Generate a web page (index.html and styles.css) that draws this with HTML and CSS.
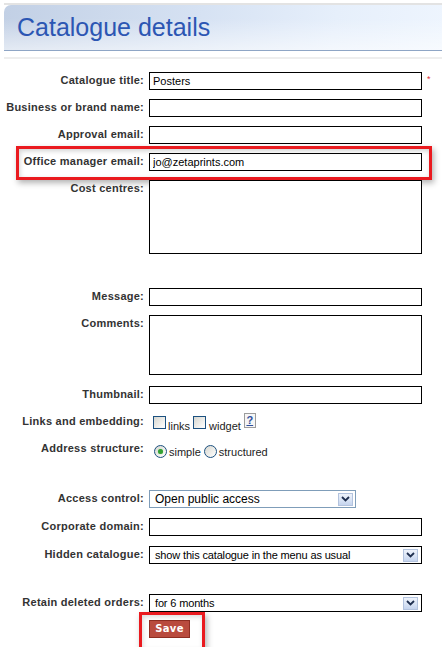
FILE: index.html
```html
<!DOCTYPE html>
<html>
<head>
<meta charset="utf-8">
<title>Catalogue details</title>
<link rel="stylesheet" href="styles.css">
</head>
<body>
<div class="page">
  <div class="topline"></div>
  <h1 class="header">Catalogue details</h1>
  <div class="sepline"></div>

  <form class="form">
    <div class="row">
      <label>Catalogue title:</label>
      <input class="text" type="text" value="Posters">
      <span class="req">*</span>
    </div>
    <div class="row">
      <label>Business or brand name:</label>
      <input class="text" type="text" value="">
    </div>
    <div class="row">
      <label>Approval email:</label>
      <input class="text" type="text" value="">
    </div>
    <div class="row row-office highlight">
      <label>Office manager email:</label>
      <input class="text" type="text" value="jo@zetaprints.com">
    </div>
    <div class="row row-cost">
      <label>Cost centres:</label>
      <textarea class="area area-cost"></textarea>
    </div>
    <div class="row">
      <label>Message:</label>
      <input class="text" type="text" value="">
    </div>
    <div class="row row-comments">
      <label>Comments:</label>
      <textarea class="area area-comments"></textarea>
    </div>
    <div class="row">
      <label>Thumbnail:</label>
      <input class="text" type="text" value="">
    </div>
    <div class="row row-links">
      <label>Links and embedding:</label>
      <div class="choices">
        <span class="check first"></span><span class="opt opt-links">links</span>
        <span class="check"></span><span class="opt opt-widget">widget</span>
        <span class="help">?</span>
      </div>
    </div>
    <div class="row row-address">
      <label>Address structure:</label>
      <div class="choices">
        <span class="radio first on"><span class="dot"></span></span><span class="opt opt-simple">simple</span>
        <span class="radio"></span><span class="opt opt-struct">structured</span>
      </div>
    </div>
    <div class="row row-access">
      <label>Access control:</label>
      <div class="select select-access">
        <span class="sel-text">Open public access</span>
        <span class="sel-btn"><svg width="9" height="6" viewBox="0 0 9 6"><polyline points="1,1 4.5,4.5 8,1" fill="none" stroke="#1f2f4f" stroke-width="1.8"/></svg></span>
      </div>
    </div>
    <div class="row">
      <label>Corporate domain:</label>
      <input class="text" type="text" value="">
    </div>
    <div class="row row-hidden">
      <label>Hidden catalogue:</label>
      <div class="select">
        <span class="sel-text">show this catalogue in the menu as usual</span>
        <span class="sel-btn"><svg width="9" height="6" viewBox="0 0 9 6"><polyline points="1,1 4.5,4.5 8,1" fill="none" stroke="#1f2f4f" stroke-width="1.8"/></svg></span>
      </div>
    </div>
    <div class="row row-retain">
      <label>Retain deleted orders:</label>
      <div class="select">
        <span class="sel-text">for 6 months</span>
        <span class="sel-btn"><svg width="9" height="6" viewBox="0 0 9 6"><polyline points="1,1 4.5,4.5 8,1" fill="none" stroke="#1f2f4f" stroke-width="1.8"/></svg></span>
      </div>
    </div>
    <div class="row row-save">
      <span></span>
      <div class="save-wrap"><button type="button" class="save">Save</button></div>
    </div>
  </form>
</div>
</body>
</html>
```

FILE: styles.css
```css
* {
  box-sizing: border-box;
}

body {
  margin: 0;
  background: #ffffff;
  font-family: "Liberation Sans", Arial, sans-serif;
}

.page {
  width: 442px;
}

.topline {
  height: 2px;
  margin: 3px 0 0 4px;
  background: #e3e3e3;
}

.header {
  margin: 0 0 0 4px;
  height: 46px;
  padding-left: 13px;
  font-size: 25px;
  font-weight: normal;
  line-height: 45px;
  color: #2c56b3;
  border-bottom: 1px solid #8ea5c5;
  border-top-left-radius: 7px;
  background:
    linear-gradient(to bottom, rgba(255, 255, 255, 0) 30%, rgba(255, 255, 255, 0.55) 100%),
    linear-gradient(100deg, #c2d0e5 0%, #d6e2f3 45%, #e6effb 75%, #eef5fe 100%);
}

.sepline {
  height: 2px;
  margin: 6px 0 0 4px;
  background: #eeeeee;
}

.form {
  padding-top: 13px;
}

.row {
  position: relative;
  display: grid;
  grid-template-columns: 144px 273px auto;
  column-gap: 5px;
  align-items: start;
  margin-bottom: 9px;
}

.row label {
  text-align: right;
  white-space: nowrap;
  font-size: 11px;
  font-weight: bold;
  letter-spacing: 0.25px;
  line-height: 16px;
  color: #333333;
}

.text {
  display: block;
  width: 273px;
  height: 18px;
  margin: 0;
  padding: 0 3px;
  border: 1px solid #000000;
  border-radius: 0;
  font-family: "Liberation Sans", Arial, sans-serif;
  font-size: 11px;
  color: #000000;
  background: #ffffff;
  outline: none;
}

.req {
  font-size: 9px;
  line-height: 14px;
  color: #e0303a;
}

.area {
  display: block;
  width: 273px;
  margin: 0;
  padding: 2px 3px;
  border: 1px solid #000000;
  border-radius: 0;
  resize: none;
  font-family: "Liberation Sans", Arial, sans-serif;
  font-size: 11px;
  background: #ffffff;
  outline: none;
}

.area-cost {
  height: 74px;
}

.area-comments {
  height: 60px;
}

.row-cost {
  margin-bottom: 34px;
}

.row-comments {
  margin-bottom: 11px;
}

/* highlighted row */
.highlight::after {
  content: "";
  position: absolute;
  left: 16px;
  top: -7px;
  width: 410px;
  height: 28px;
  border: 3px solid #ea1a1f;
  box-shadow: 2px 3px 6px rgba(0, 0, 0, 0.3), inset 1px 2px 5px rgba(0, 0, 0, 0.18);
  pointer-events: none;
}

/* choices */
.choices {
  display: flex;
  align-items: flex-start;
  font-size: 11px;
  color: #222222;
}

.opt {
  line-height: 16px;
}

.check {
  width: 13px;
  height: 13px;
  margin-top: 3px;
  margin-left: 3px;
  border: 1px solid #1c5180;
  background: linear-gradient(135deg, #d6d6d0 0%, #f4f4f1 70%, #ffffff 100%);
}

.check.first {
  margin-left: 4px;
}

.row-links .opt {
  margin-top: 5px;
}

.opt-links {
  margin-left: 2px;
}

.opt-widget {
  margin-left: 3px;
}

.help {
  width: 12px;
  height: 15px;
  margin-left: 3px;
  border: 1px solid #9c9c9c;
  background: #f6f6f6;
  text-align: center;
  font-size: 11px;
  font-weight: bold;
  line-height: 12px;
  color: #2f4f9c;
  text-decoration: underline;
}

.row-links {
  margin-bottom: 6px;
}

.radio {
  display: flex;
  align-items: center;
  justify-content: center;
  width: 13px;
  height: 13px;
  margin-top: 5px;
  margin-left: 3px;
  border: 1px solid #1c5180;
  border-radius: 50%;
  background: linear-gradient(135deg, #d6d6d0 0%, #f4f4f1 70%, #ffffff 100%);
}

.radio.first {
  margin-left: 5px;
}

.dot {
  width: 5px;
  height: 5px;
  border-radius: 50%;
  background: #32a032;
  box-shadow: 0 0 1px #7fd07f;
}

.row-address .opt {
  margin-top: 4px;
}

.opt-simple {
  margin-left: 2px;
}

.opt-struct {
  margin-left: 2px;
}

.row-address {
  margin-bottom: 30px;
}

/* selects */
.select {
  display: flex;
  align-items: center;
  justify-content: space-between;
  width: 273px;
  height: 18px;
  padding: 0 3px 0 5px;
  border: 1px solid #000000;
  background: #ffffff;
  font-size: 11px;
  letter-spacing: -0.15px;
  color: #000000;
}

.select-access {
  width: 207px;
  padding-right: 2px;
  border-color: #7f9db9;
  font-size: 12px;
  letter-spacing: 0;
}

.sel-text {
  white-space: nowrap;
  line-height: 16px;
}

.sel-btn {
  display: flex;
  align-items: center;
  justify-content: center;
  width: 15px;
  height: 13px;
  border: 1px solid #b3c3de;
  background: linear-gradient(to bottom, #eef3fb 0%, #d7e2f4 60%, #c5d4ee 100%);
}

.row-access {
  margin-bottom: 10px;
}

.row-hidden {
  margin-bottom: 30px;
}

.row-retain {
  margin-bottom: 8px;
}

.row-hidden .select,
.row-access + .row {
  margin-bottom: 0;
}

.row-access + .row {
  margin-bottom: 10px;
}

/* save */
.save-wrap {
  position: relative;
  width: 41px;
}

.save-wrap::after {
  content: "";
  position: absolute;
  left: -10px;
  top: -8px;
  width: 60px;
  height: 33px;
  border: 3px solid #ea1a1f;
  box-shadow: 2px 3px 6px rgba(0, 0, 0, 0.3), inset 1px 2px 5px rgba(0, 0, 0, 0.15);
  pointer-events: none;
}

.save {
  display: block;
  width: 41px;
  height: 18px;
  margin: 0;
  padding: 0;
  border: 1px solid #8e2e22;
  background: #b94b3e;
  color: #ffffff;
  font-family: "DejaVu Sans", Verdana, sans-serif;
  font-size: 10px;
  font-weight: bold;
  letter-spacing: 0.3px;
  line-height: 16px;
  text-align: center;
}
```
